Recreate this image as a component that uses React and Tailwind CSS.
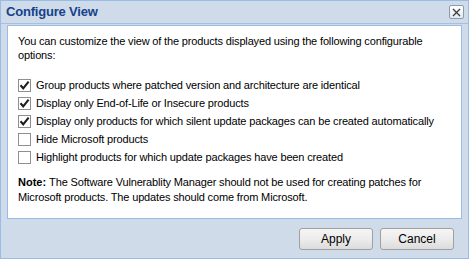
import React, { useState } from 'react'

const options = [
  { id: 'group', label: 'Group products where patched version and architecture are identical', checked: true },
  { id: 'eol', label: 'Display only End-of-Life or Insecure products', checked: true },
  { id: 'silent', label: 'Display only products for which silent update packages can be created automatically', checked: true },
  { id: 'hidems', label: 'Hide Microsoft products', checked: false },
  { id: 'highlight', label: 'Highlight products for which update packages have been created', checked: false },
]

const CheckBox = ({ checked, onChange }) => (
  <button
    type="button"
    onClick={onChange}
    className="w-[13px] h-[13px] border border-[#8f8f8f] bg-white flex items-center justify-center shrink-0"
  >
    {checked ? (
      <svg width="11" height="11" viewBox="0 0 11 11">
        <path d="M1.5 5.3 L4.2 8.3 L9.6 1.6" fill="none" stroke="#1e1e1e" strokeWidth="2.1" />
      </svg>
    ) : null}
  </button>
)

const App = () => {
  const [values, setValues] = useState(options.map((o) => o.checked))

  const toggle = (i) => setValues((v) => v.map((x, j) => (j === i ? !x : x)))

  return (
    <div className="w-[469px] h-[259px] bg-[#cfdbe8] border border-[#99bbe8] flex flex-col font-['Liberation_Sans',sans-serif] text-[11px] text-black">
      <div className="h-[23px] flex items-center justify-between pl-[5px] pr-[4px] border-b border-[#a8c0dc]">
        <span className="font-bold text-[13px] text-[#15428b] tracking-[-0.2px]">Configure View</span>
        <button
          type="button"
          className="w-[15px] h-[14px] border border-[#8d9bb0] rounded-[2px] bg-gradient-to-b from-white to-[#e3e8ef] flex items-center justify-center"
        >
          <svg width="9" height="9" viewBox="0 0 9 9">
            <path d="M1 1 L8 8 M8 1 L1 8" stroke="#3a3a3a" strokeWidth="1.3" />
          </svg>
        </button>
      </div>

      <div className="flex-1 px-[6px] pt-[1px] flex flex-col">
        <div className="bg-white border border-[#99bbe8] h-[194px] px-[10px] pt-[8px] tracking-[-0.15px]">
          <p className="leading-[14px]">
            You can customize the view of the products displayed using the following configurable options:
          </p>

          <div className="mt-[17px] flex flex-col gap-[5px]">
            {options.map((o, i) => (
              <label key={o.id} className="flex items-center gap-[5px] h-[13px] cursor-pointer">
                <CheckBox checked={values[i]} onChange={() => toggle(i)} />
                <span>{o.label}</span>
              </label>
            ))}
          </div>

          <div className="mt-[11px] leading-[15px]">
            <b className="tracking-normal mr-[3px]">Note:</b>The Software Vulnerablity Manager should not be used for creating patches for Microsoft products. The updates should come from Microsoft.
          </div>
        </div>

        <div className="flex justify-end gap-[7px] mt-[9px] pr-[8px]">
          <button
            type="button"
            className="w-[74px] h-[22px] border border-[#a0a0a0] rounded-[3px] bg-gradient-to-b from-[#f5f5f5] via-[#ececec] to-[#dcdcdc] text-[12px]"
          >
            Apply
          </button>
          <button
            type="button"
            className="w-[74px] h-[22px] border border-[#a0a0a0] rounded-[3px] bg-gradient-to-b from-[#f5f5f5] via-[#ececec] to-[#dcdcdc] text-[12px]"
          >
            Cancel
          </button>
        </div>
      </div>
    </div>
  )
}

export default App
